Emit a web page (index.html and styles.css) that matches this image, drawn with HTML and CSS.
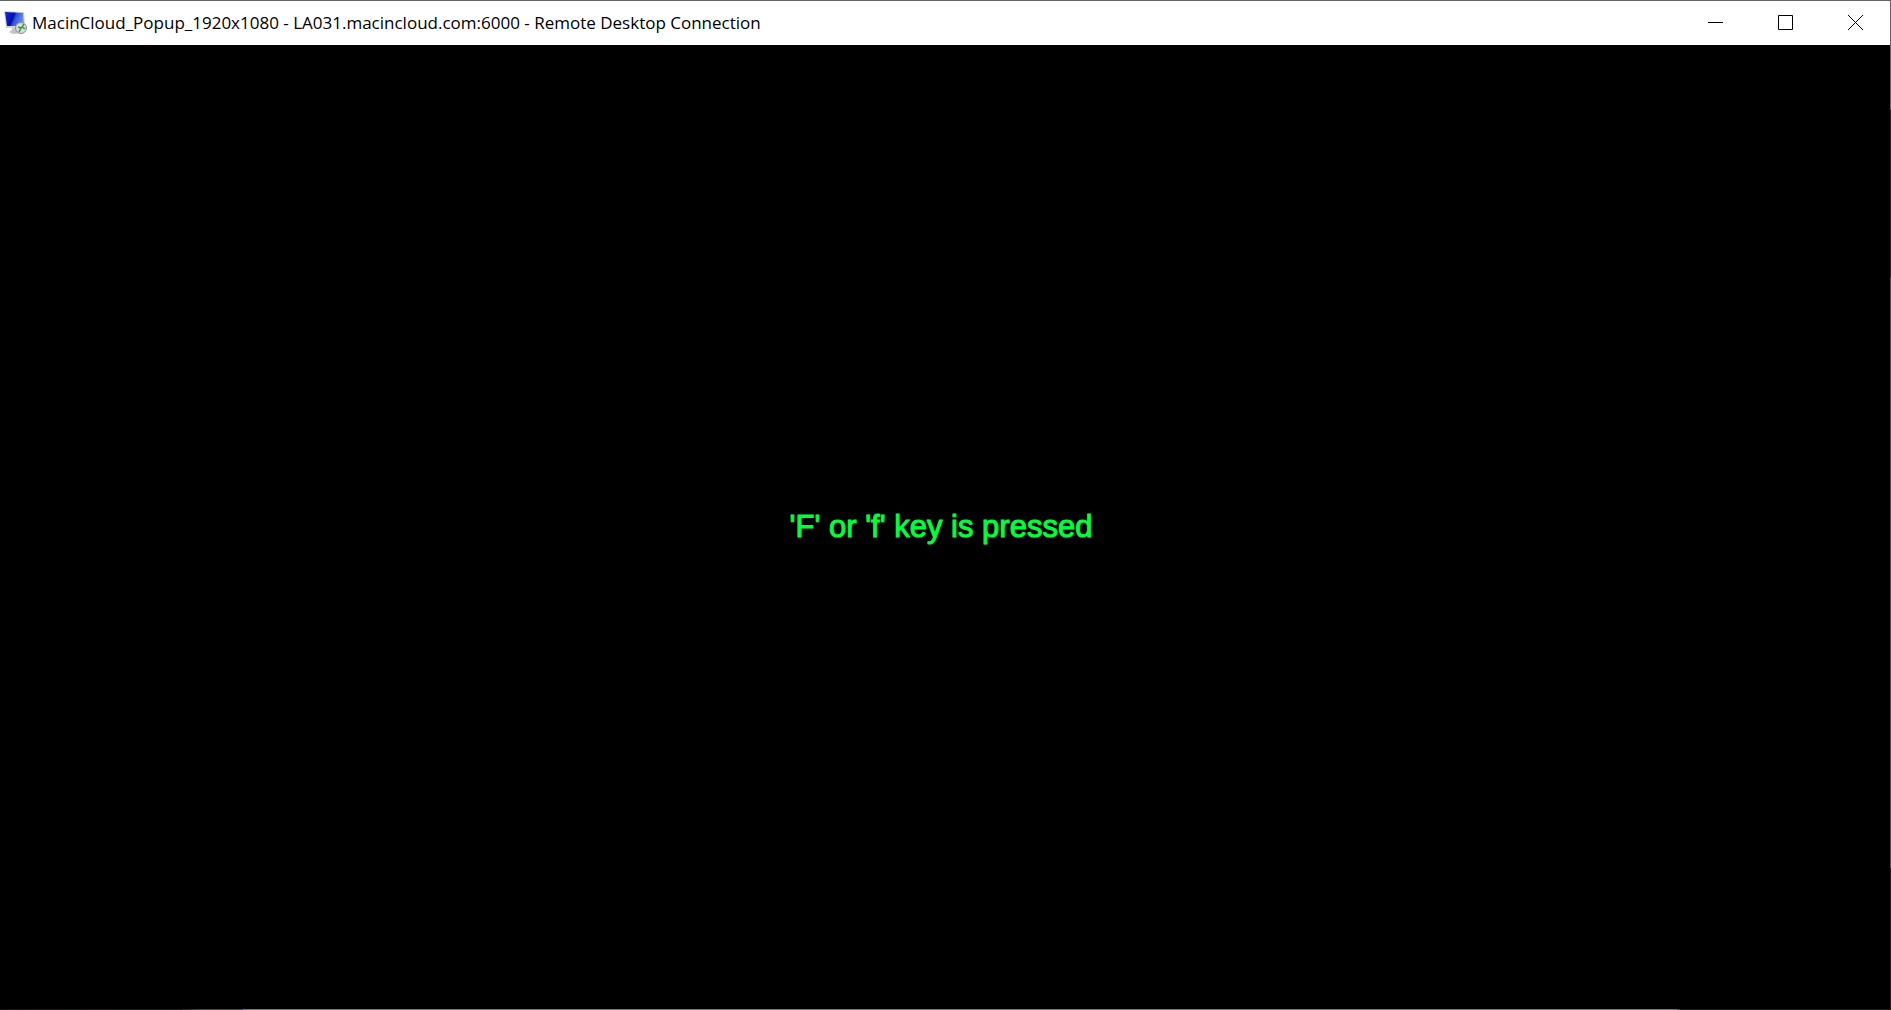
FILE: index.html
```html
<!DOCTYPE html>
<html lang="en">
<head>
<meta charset="utf-8">
<title>Remote Desktop Connection</title>
<link rel="stylesheet" href="styles.css">
</head>
<body>
<div class="window">
  <header class="titlebar">
    <svg class="app-icon" viewBox="0 0 24 24" aria-hidden="true">
      <defs>
        <linearGradient id="screen" x1="0" y1="0.2" x2="1" y2="0.5">
          <stop offset="0" stop-color="#1a22d8"/>
          <stop offset="0.45" stop-color="#0410a8"/>
          <stop offset="0.54" stop-color="#2a50d8"/>
          <stop offset="1" stop-color="#6f96ee"/>
        </linearGradient>
      </defs>
      <path d="M8 16h8v4l2 2-9 1-4-2 3-2z" fill="#c2c4c8"/>
      <path d="M0 0l20 1 1 14-1 2L2 17z" fill="#d0d3da"/>
      <path d="M1 1l18 1 1 13H3z" fill="url(#screen)"/>
      <circle cx="17" cy="17" r="5.5" fill="#dadcdb" stroke="#8d9092"/>
      <path d="M14 16l3 1-2 4M20 13l-2 3 3 2" fill="none" stroke="#2f9d45" stroke-width="1.5"/>
    </svg>
    <h1 class="title">MacinCloud_Popup_1920x1080 - LA031.macincloud.com:6000 - Remote Desktop Connection</h1>
    <div class="controls">
      <button class="control" type="button" aria-label="Minimize">
        <svg class="glyph" viewBox="0 0 15 15"><path d="M0 7.5h15"/></svg>
      </button>
      <button class="control" type="button" aria-label="Maximize">
        <svg class="glyph" viewBox="0 0 15 15"><path d="M.5.5h14v14H.5z"/></svg>
      </button>
      <button class="control" type="button" aria-label="Close">
        <svg class="glyph" viewBox="0 0 15 15"><path d="M0 0l15 15M15 0L0 15"/></svg>
      </button>
    </div>
  </header>
  <main class="session">
    <p class="message">'F' or 'f' key is pressed</p>
  </main>
  <div class="edge-right"></div>
  <div class="edge-bottom"></div>
</div>
</body>
</html>
```
FILE: styles.css
```css
* {
  box-sizing: border-box;
}

body {
  margin: 0;
  background: #000;
}

.window {
  display: grid;
  grid-template-columns: 1fr 1px;
  grid-template-rows: auto 1fr 1px;
  min-height: 100vh;
}

.titlebar {
  display: flex;
  align-items: center;
  height: 45px;
  padding-left: 4px;
  border-top: 1px solid #656565;
  background: #fff;
}

.app-icon {
  flex: none;
  width: 24px;
  height: 24px;
  margin-right: 4px;
}

.title {
  flex: 1;
  margin: 0;
  font: 400 17px/24px "Open Sans", "Segoe UI", sans-serif;
  color: #000;
  white-space: nowrap;
}

.controls {
  display: flex;
  align-self: stretch;
}

.control {
  display: flex;
  align-items: center;
  justify-content: center;
  width: 70px;
  padding: 0 0 1px;
  border: 0;
  background: none;
}

.glyph {
  width: 15px;
  height: 15px;
  fill: none;
  stroke: #000;
  stroke-width: 1;
}

.session {
  grid-column: 1;
  grid-row: 2;
  display: flex;
  align-items: center;
  justify-content: center;
  padding-right: 8px;
  background: #000;
}

.message {
  margin: 0;
  font: 400 31px/36px "Liberation Sans", Arial, sans-serif;
  color: #00ff3c;
  -webkit-text-stroke: 1px #00ff3c;
}

.edge-right {
  grid-column: 2;
  grid-row: 1 / 3;
  background: linear-gradient(#656565 110px, #222 110px, #222 277px, #505050 277px, #505050 86%, #1c1c1c 86%);
}

.edge-bottom {
  grid-column: 1 / 3;
  grid-row: 3;
  background: linear-gradient(to right, #1c1216 0, #241c1e 180px, #4a4e1c 200px, #4a4e1c 240px, #2c4468 240px, #2c4468 243px, #777 243px, #777 calc(100% - 214px), #2c4468 calc(100% - 214px), #2c4468 calc(100% - 211px), #241c1e calc(100% - 211px));
}
```
